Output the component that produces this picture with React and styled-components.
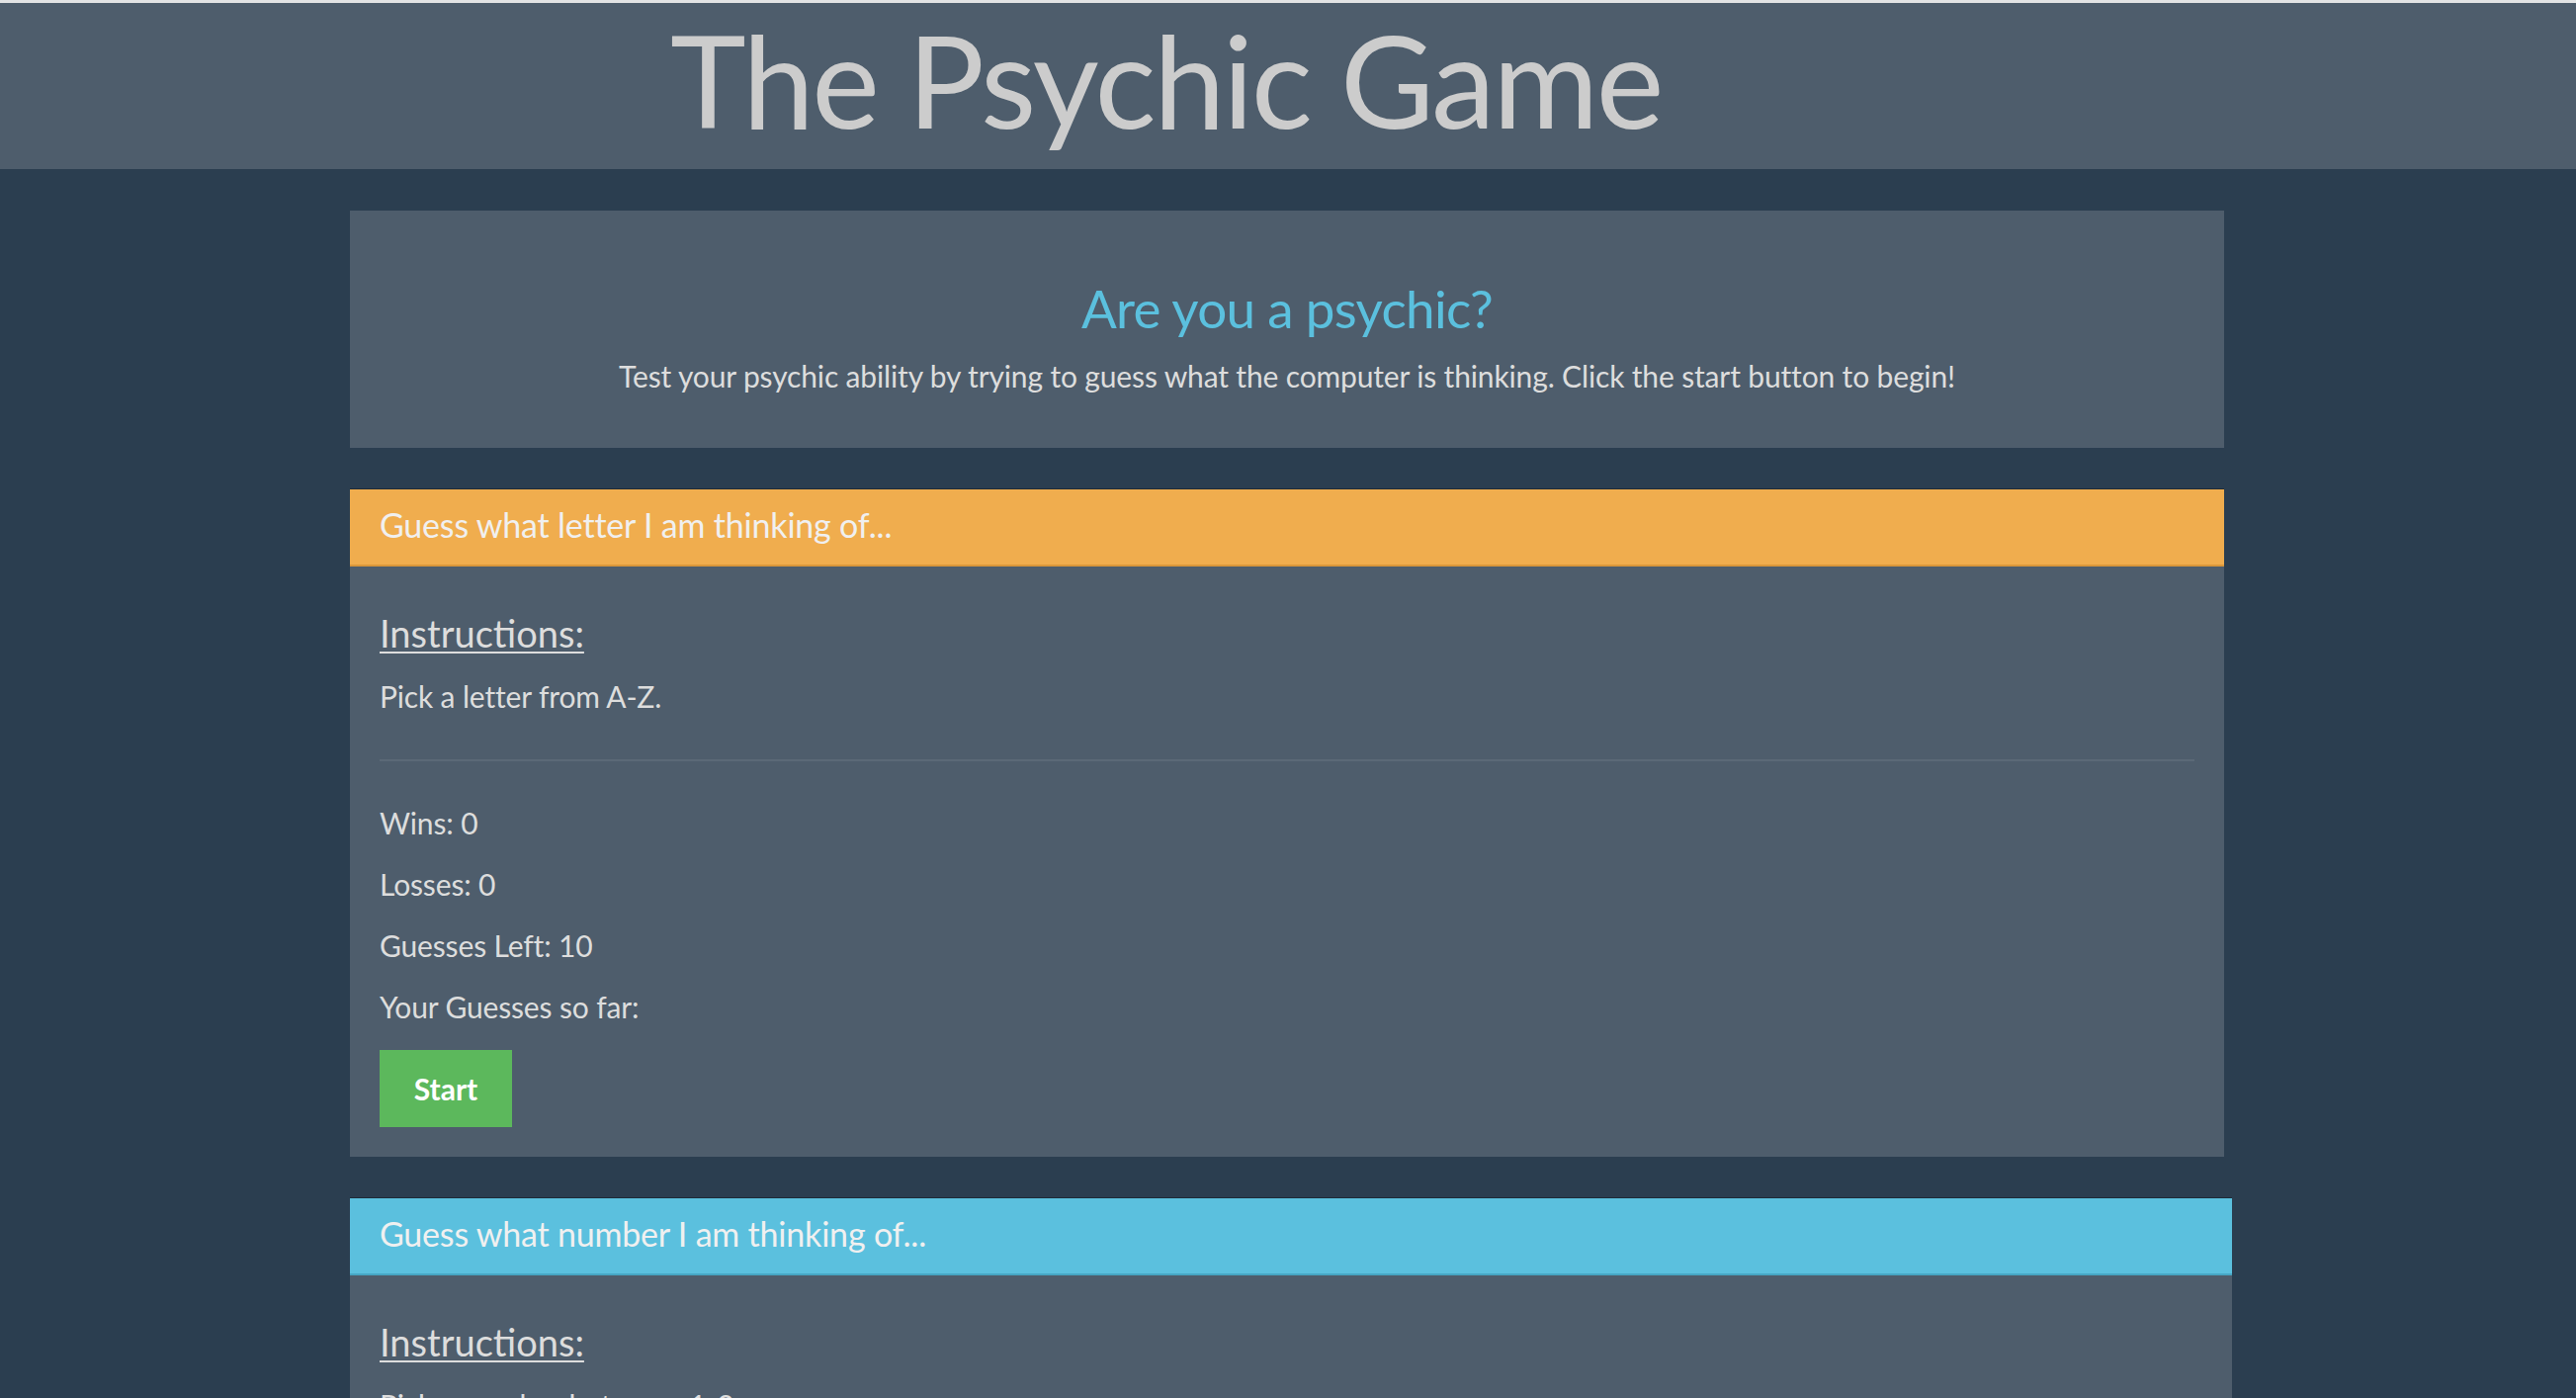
import styled, { createGlobalStyle } from "styled-components";

const GlobalStyle = createGlobalStyle`
    html, body {
        margin: 0;
        padding: 0;
        background: #2B3E50;
        font-family: Lato, "Open Sans", sans-serif;
        color: #DDDDDD;
    }
`;

const games = [
    {
        title: "Guess what letter I am thinking of...",
        rule: "Pick a letter from A-Z.",
        color: "#F0AD4E",
        edge: "#D9963A",
        width: 1896,
    },
    {
        title: "Guess what number I am thinking of...",
        rule: "Pick a number between 1-9.",
        color: "#5BC0DE",
        edge: "#46A6C4",
        width: 1904,
    },
];

export default function App() {
    return (
        <>
            <GlobalStyle />
            <Header>
                <Title>The Psychic Game</Title>
            </Header>
            <Main>
                <Intro>
                    <IntroTitle>Are you a psychic?</IntroTitle>
                    <IntroText>Test your psychic ability by trying to guess what the computer is thinking. Click the start button to begin!</IntroText>
                </Intro>
                {games.map((game) => (
                    <Panel key={game.title} width={game.width}>
                        <PanelHeading color={game.color} edge={game.edge}>{game.title}</PanelHeading>
                        <PanelBody>
                            <Instructions>Instructions:</Instructions>
                            <Text>{game.rule}</Text>
                            <Divider />
                            <Text spaced>Wins: 0</Text>
                            <Text spaced>Losses: 0</Text>
                            <Text spaced>Guesses Left: 10</Text>
                            <Text spaced>Your Guesses so far:</Text>
                            <StartButton>Start</StartButton>
                        </PanelBody>
                    </Panel>
                ))}
            </Main>
        </>
    );
}

const Header = styled.header`
    border-top: 3px solid #E2E3E4;
    background: #4E5D6C;
    padding: 0 0 14px 678px;
`;

const Title = styled.h1`
    margin: 0;
    font-size: 130px;
    line-height: 154px;
    font-weight: 400;
    letter-spacing: -2.5px;
    color: #CCCCCC;
`;

const Main = styled.main`
    display: flex;
    flex-direction: column;
    align-items: flex-start;
    gap: 41px;
    padding: 42px 0 60px 354px;
`;

const Intro = styled.section`
    width: 1896px;
    box-sizing: border-box;
    background: #4E5D6C;
    padding: 70px 30px 52px;
    text-align: center;
`;

const IntroTitle = styled.h3`
    margin: 0 0 18px;
    font-size: 53px;
    line-height: 58px;
    font-weight: 400;
    letter-spacing: -0.7px;
    color: #5BC0DE;
`;

const IntroText = styled.p`
    margin: 0;
    font-size: 30px;
    line-height: 42px;
    letter-spacing: -0.15px;
    color: #DDDDDD;
`;

const Panel = styled.section`
    width: ${(p) => p.width}px;
    background: #4E5D6C;
`;

const PanelHeading = styled.div`
    background: ${(p) => p.color};
    border-top: 1px solid #1E2B38;
    border-bottom: 2px solid ${(p) => p.edge};
    padding: 12px 30px 16px;
    font-size: 34px;
    line-height: 48px;
    letter-spacing: -0.2px;
    color: #F0F0F0;
`;

const PanelBody = styled.div`
    display: flex;
    flex-direction: column;
    align-items: flex-start;
    padding: 30px;
`;

const Instructions = styled.h4`
    margin: 17px 0 22px;
    font-size: 38px;
    line-height: 41px;
    font-weight: 400;
    text-decoration: underline;
    text-decoration-thickness: 2px;
    text-underline-offset: 4px;
    color: #DDDDDD;
`;

const Text = styled.p`
    margin: 0 0 ${(p) => (p.spaced ? "20px" : "0")};
    font-size: 30px;
    line-height: 42px;
    letter-spacing: -0.15px;
    color: #DDDDDD;
`;

const Divider = styled.hr`
    align-self: stretch;
    margin: 43px 0 41px;
    border: 0;
    border-top: 2px solid #5B6977;
`;

const StartButton = styled.button`
    margin-top: 3px;
    width: 134px;
    height: 78px;
    border: none;
    background: #5CB85C;
    color: #FFFFFF;
    font-family: Lato, "Open Sans", sans-serif;
    font-size: 30px;
    font-weight: 700;
    line-height: 78px;
    padding: 0;
    text-align: center;
`;
